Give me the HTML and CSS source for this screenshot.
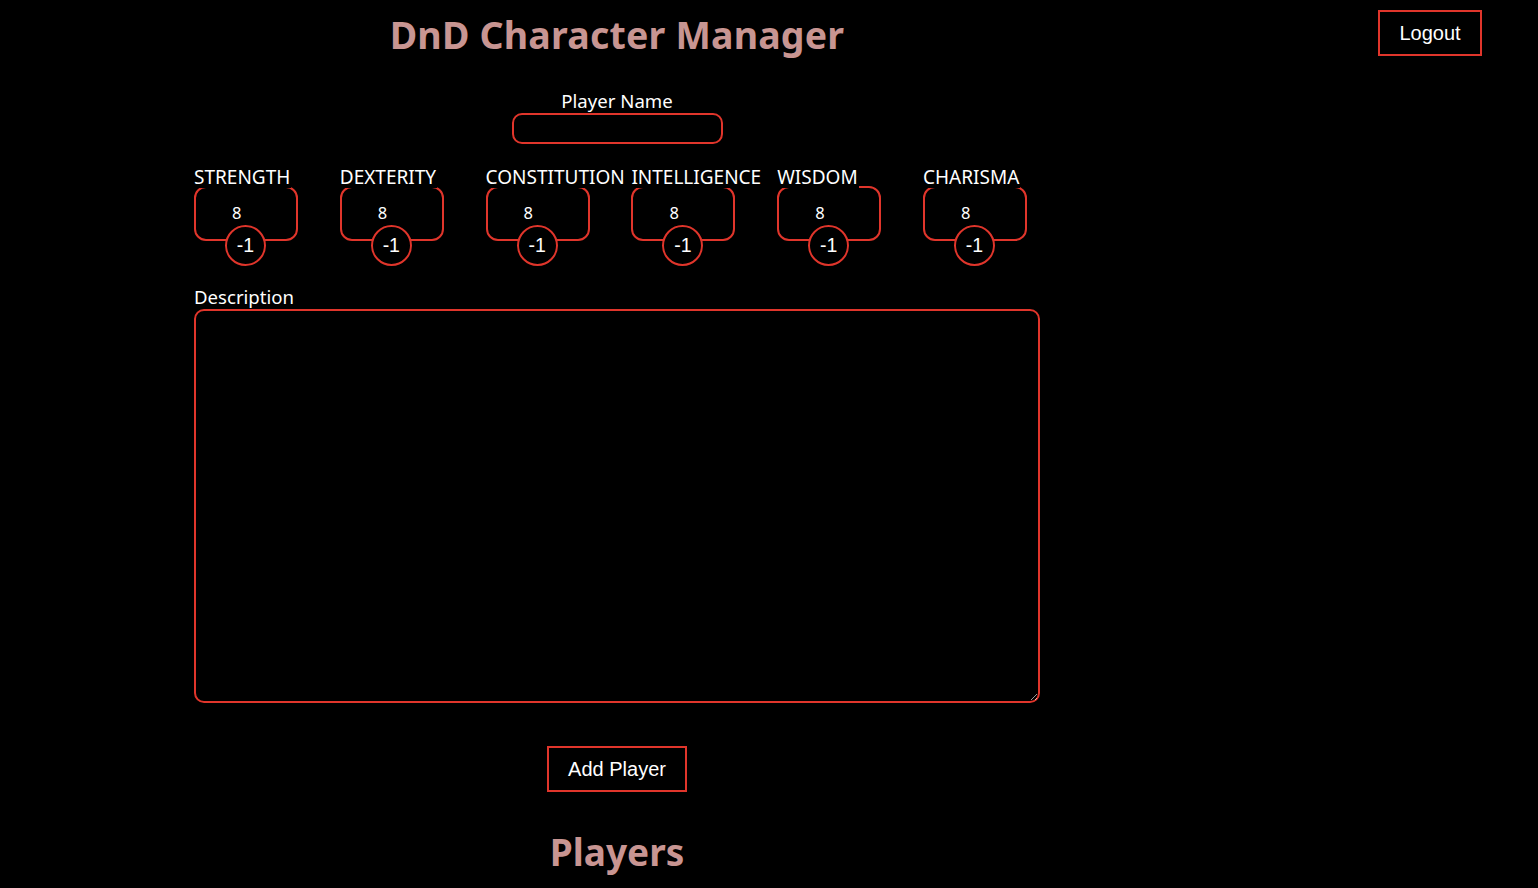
FILE: index.html
```html
<!DOCTYPE html>
<html lang="en">
<head>
<meta charset="utf-8">
<title>DnD Character Manager</title>
<link rel="stylesheet" href="styles.css">
</head>
<body>
<button class="btn logout">Logout</button>
<main class="app">
  <h1 class="title">DnD Character Manager</h1>
  <div class="name-field">
    <label class="field-label" for="pname">Player Name</label>
    <input class="name-input" id="pname" type="text">
  </div>
  <div class="stats">
    <div class="stat"><span class="stat-name">STRENGTH</span><div class="stat-box"><span class="stat-value">8</span><span class="stat-mod">-1</span></div></div>
    <div class="stat"><span class="stat-name">DEXTERITY</span><div class="stat-box"><span class="stat-value">8</span><span class="stat-mod">-1</span></div></div>
    <div class="stat"><span class="stat-name">CONSTITUTION</span><div class="stat-box"><span class="stat-value">8</span><span class="stat-mod">-1</span></div></div>
    <div class="stat"><span class="stat-name">INTELLIGENCE</span><div class="stat-box"><span class="stat-value">8</span><span class="stat-mod">-1</span></div></div>
    <div class="stat"><span class="stat-name">WISDOM</span><div class="stat-box"><span class="stat-value">8</span><span class="stat-mod">-1</span></div></div>
    <div class="stat"><span class="stat-name">CHARISMA</span><div class="stat-box"><span class="stat-value">8</span><span class="stat-mod">-1</span></div></div>
  </div>
  <div class="desc-field">
    <label class="field-label desc-label" for="desc">Description</label>
    <textarea class="desc-input" id="desc"></textarea>
  </div>
  <button class="btn add">Add Player</button>
  <h2 class="players-title">Players</h2>
</main>
</body>
</html>
```
FILE: styles.css
```css
html, body {
  margin: 0;
  padding: 0;
  background: #000;
  color: #fff;
  font-family: "Noto Sans", "Open Sans", sans-serif;
}
body {
  position: relative;
  min-height: 888px;
  overflow: hidden;
}
.btn {
  background: #000;
  color: #fff;
  border: 2px solid #e0352b;
  font-family: "Liberation Sans", Arial, sans-serif;
  font-size: 20px;
  cursor: pointer;
}
.logout {
  position: absolute;
  top: 10px;
  right: 56px;
  width: 104px;
  height: 46px;
}
.app {
  width: 846px;
  margin-left: 194px;
  display: flex;
  flex-direction: column;
  align-items: center;
}
.title {
  margin: 10px 0 0;
  font-size: 37.5px;
  line-height: 50px;
  font-weight: 700;
  color: #c89592;
  letter-spacing: 0.2px;
}
.name-field {
  margin-top: 29px;
  display: flex;
  flex-direction: column;
  align-items: center;
}
.field-label {
  font-size: 18.6px;
  line-height: 24px;
}
.name-input {
  margin-top: 0;
  width: 211px;
  height: 31px;
  box-sizing: border-box;
  background: #000;
  color: #fff;
  border: 2px solid #e0352b;
  border-radius: 10px;
}
.stats {
  align-self: flex-start;
  margin-top: 22px;
  display: flex;
  gap: 4px;
}
.stat {
  width: 141.8px;
  display: flex;
  flex-direction: column;
}
.stat-name {
  align-self: flex-start;
  position: relative;
  z-index: 1;
  background: #000;
  font-size: 19px;
  line-height: 22px;
  padding-right: 1px;
  margin-bottom: -2px;
}
.stat-box {
  position: relative;
  width: 104px;
  height: 55px;
  box-sizing: border-box;
  border: 2px solid #e0352b;
  border-radius: 12px;
}
.stat-value {
  position: absolute;
  left: 36px;
  top: 15px;
  font-size: 16.5px;
  line-height: 20px;
}
.stat-mod {
  position: absolute;
  left: 29px;
  top: 37px;
  width: 41px;
  height: 41px;
  box-sizing: border-box;
  border: 2px solid #e0352b;
  border-radius: 50%;
  background: #000;
  display: flex;
  align-items: center;
  justify-content: center;
  font-family: "Liberation Sans", Arial, sans-serif;
  font-size: 19.5px;
}
.desc-field {
  align-self: stretch;
  margin-top: 44px;
  display: flex;
  flex-direction: column;
}
.desc-label {
  align-self: flex-start;
  margin-bottom: 0;
}
.desc-input {
  width: 846px;
  height: 394px;
  box-sizing: border-box;
  background: #000;
  color: #fff;
  border: 2px solid #e0352b;
  border-radius: 10px;
}
.add {
  margin-top: 43px;
  width: 140px;
  height: 46px;
}
.players-title {
  margin: 33px 0 0;
  font-size: 37px;
  line-height: 54px;
  font-weight: 700;
  color: #c89592;
}
```
